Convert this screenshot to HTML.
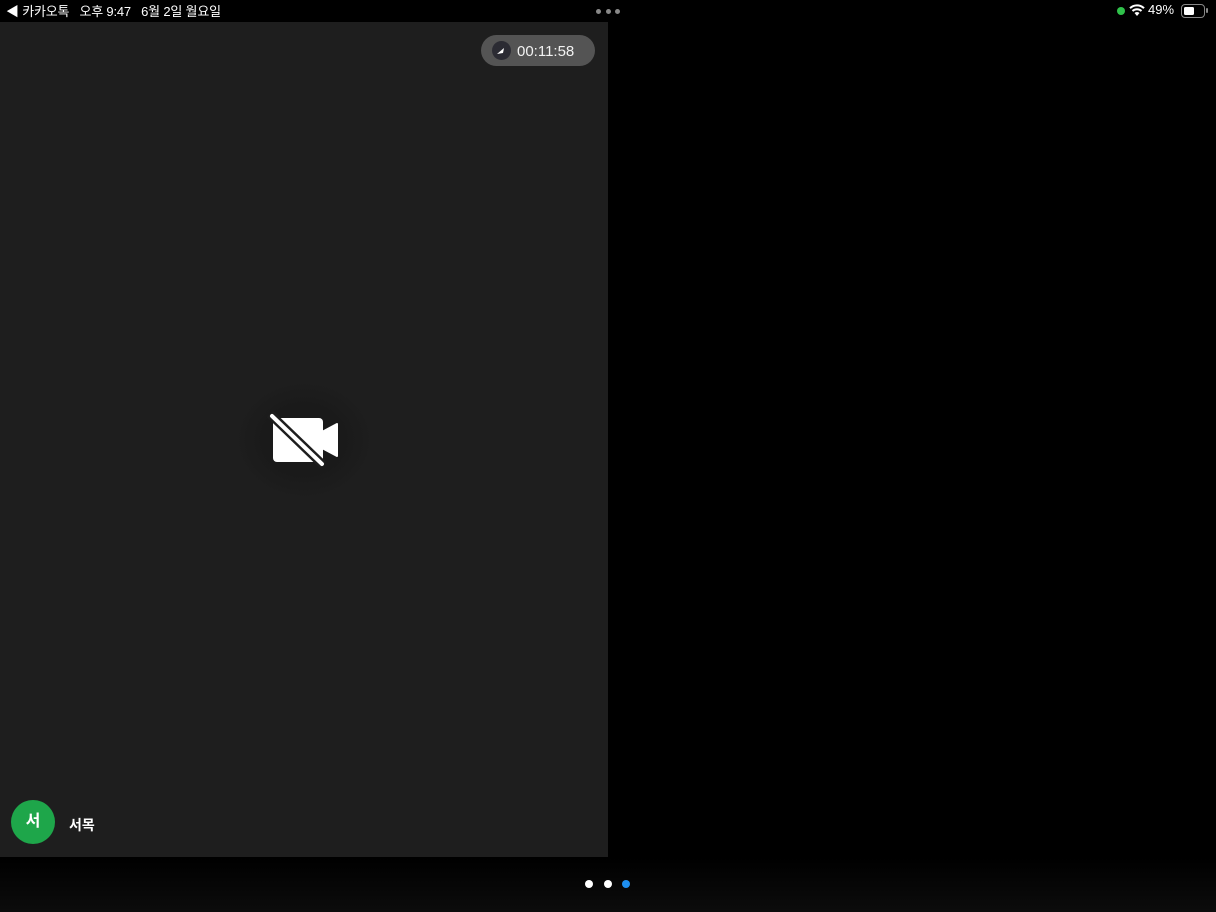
<!DOCTYPE html>
<html><head><meta charset="utf-8"><style>
*{margin:0;padding:0;box-sizing:border-box}
body{width:1216px;height:912px;background:#000;position:relative;overflow:hidden;font-family:"Liberation Sans","Noto Sans CJK KR",sans-serif;color:#fff}
.abs{position:absolute}
</style></head><body>
<div class="abs" style="left:0;top:857px;width:1216px;height:55px;background:linear-gradient(#000,#0c0c0c)"></div>
<div class="abs" style="left:0;top:22px;width:608px;height:835px;background:#1e1e1e"></div>
<div class="abs" style="left:6px;top:1px;font-size:13px;white-space:nowrap;letter-spacing:-0.2px">◀ 카카오톡&nbsp;&nbsp;&nbsp;오후 9:47&nbsp;&nbsp;&nbsp;6월 2일 월요일</div>
<div class="abs" style="left:596px;top:9px;width:24px;height:5px;display:flex;justify-content:space-between">
<i style="width:5px;height:5px;border-radius:50%;background:#888"></i><i style="width:5px;height:5px;border-radius:50%;background:#888"></i><i style="width:5px;height:5px;border-radius:50%;background:#888"></i></div>
<div class="abs" style="left:1117px;top:7px;width:8px;height:8px;border-radius:50%;background:#30c24b"></div>
<svg class="abs" style="left:1129px;top:4px" width="16" height="13" viewBox="0 0 16 13"><path d="M8 12 L5.5 9 A3.5 3.5 0 0 1 10.5 9Z" fill="#fff"/><path d="M3.5 7 A6.5 6.5 0 0 1 12.5 7" stroke="#fff" stroke-width="2" fill="none"/><path d="M1 4.2 A10 10 0 0 1 15 4.2" stroke="#fff" stroke-width="2" fill="none"/></svg>
<div class="abs" style="left:1148px;top:2px;font-size:13px">49%</div>
<div class="abs" style="left:1181px;top:4px;width:24px;height:14px;border:1.5px solid #888;border-radius:4px"><div style="margin:1.5px;width:10px;height:8px;background:#fff;border-radius:1.5px"></div></div>
<div class="abs" style="left:1206px;top:8px;width:2px;height:5px;background:#888;border-radius:1px"></div>
<div class="abs" style="left:481px;top:35px;width:114px;height:31px;border-radius:16px;background:#545454"></div>
<div class="abs" style="left:492px;top:41px;width:19px;height:19px;border-radius:50%;background:#2b2b33"></div>
<svg class="abs" style="left:496px;top:46px" width="10" height="9" viewBox="0 0 10 9"><path d="M1 8 L8 2 L7 7Z" fill="#fff"/></svg>
<div class="abs" style="left:517px;top:43px;font-size:15px;color:#f2f2f2">00:11:58</div>
<div class="abs" style="left:234px;top:380px;width:140px;height:120px;border-radius:50%;background:radial-gradient(#1a1a1a 40%,#1e1e1e 70%)"></div>
<svg class="abs" style="left:266px;top:410px" width="76" height="60" viewBox="0 0 76 60">
<rect x="7" y="8" width="50" height="44" rx="4" fill="#fff"/>
<path d="M56 22 L71 14 L71 46 L56 38Z" fill="#fff" stroke="#fff" stroke-width="2" stroke-linejoin="round"/>
<line x1="4" y1="4" x2="57" y2="55" stroke="#1e1e1e" stroke-width="9"/>
<line x1="6" y1="6" x2="56" y2="54" stroke="#fff" stroke-width="4" stroke-linecap="round"/>
</svg>
<div class="abs" style="left:11px;top:800px;width:44px;height:44px;border-radius:50%;background:#1ea64a;text-align:center;line-height:44px;font-size:16px;font-weight:bold">서</div>
<div class="abs" style="left:69px;top:815px;font-size:14px;font-weight:bold">서목</div>
<div class="abs" style="left:585px;top:880px;width:8px;height:8px;border-radius:50%;background:#fff"></div>
<div class="abs" style="left:604px;top:880px;width:8px;height:8px;border-radius:50%;background:#fff"></div>
<div class="abs" style="left:622px;top:880px;width:8px;height:8px;border-radius:50%;background:#1e8ff0"></div>
</body></html>
